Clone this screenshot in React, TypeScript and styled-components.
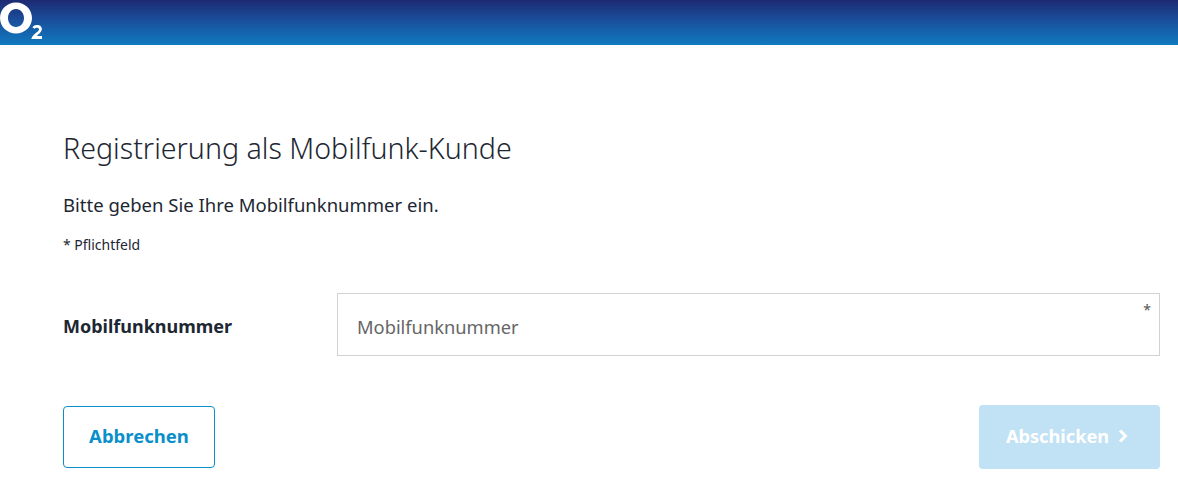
import React from "react";
import styled, { createGlobalStyle } from "styled-components";

const Global = createGlobalStyle`
  html, body { margin: 0; padding: 0; background: #fff; }
  body { font-family: "Noto Sans", "Open Sans", sans-serif; color: #1d2733; }
  * { box-sizing: border-box; }
`;

const Header = styled.header`
  height: 45px;
  background: linear-gradient(180deg, #1c2a72 0%, #1a4f9c 45%, #0f7abf 100%);
  overflow: hidden;
`;

const Logo = styled.svg`
  display: block;
  width: 48px;
  height: 45px;
`;

const Main = styled.main`
  padding: 83px 18px 0 63px;
`;

const Title = styled.h1`
  margin: 0;
  font-size: 28.6px;
  line-height: 40px;
  font-weight: 300;
  color: #1d2733;
`;

const Lead = styled.p`
  margin: 24px 0 0;
  font-size: 18.5px;
  line-height: 26px;
  font-weight: 400;
`;

const Note = styled.p`
  margin: 17px 0 0;
  font-size: 14px;
  line-height: 20px;
`;

const FieldRow = styled.div`
  display: grid;
  grid-template-columns: 274px 1fr;
  align-items: center;
  margin-top: 38px;
`;

const Label = styled.label`
  font-size: 18px;
  font-weight: 700;
  padding-top: 2px;
`;

const InputWrap = styled.div`
  position: relative;
  height: 63px;
  border: 1px solid #d2d2d2;
  display: flex;
  align-items: center;
  padding: 4px 19px 0;
`;

const Input = styled.input`
  border: 0;
  outline: 0;
  width: 100%;
  font: 400 18.3px "Noto Sans", sans-serif;
  color: #1d2733;
  padding: 0;
  &::placeholder { color: #666; opacity: 1; }
`;

const Star = styled.span`
  position: absolute;
  top: 7px;
  right: 8px;
  font-size: 14px;
  line-height: 18px;
  color: #555;
`;

const Actions = styled.div`
  display: flex;
  justify-content: space-between;
  align-items: center;
  margin-top: 49px;
`;

const Cancel = styled.button`
  width: 152px;
  height: 62px;
  background: #fff;
  border: 1px solid #0b8fc9;
  border-radius: 4px;
  color: #0b8fc9;
  font: 700 18.5px "Noto Sans", sans-serif;
  padding: 0 0 4px;
`;

const Submit = styled.button`
  width: 181px;
  height: 64px;
  background: #c0e2f4;
  border: 0;
  border-radius: 4px;
  color: #fff;
  font: 700 18.2px "Noto Sans", sans-serif;
  display: flex;
  align-items: center;
  justify-content: center;
  gap: 9px;
  padding: 0 5px 3px 0;
`;

export default function App() {
  return (
    <>
      <Global />
      <Header>
        <Logo viewBox="0 0 48 45" aria-label="O2">
          <path
            fillRule="evenodd"
            fill="#fff"
            d="M16 2.500C7 2.500 0 9.500 0 18s7 15.500 16 15.500S32 26.500 32 18 25 2.500 16 2.500zm0 6.500c-4.600 0-8 4-8 9s3.400 9 8 9 8-4 8-9-3.400-9-8-9z"
          />
          <path d="M33.500 28c1.500-2.200 6.500-2.400 7 1 .4 3-5.500 5.500-7 8.500h8.500" fill="none" stroke="#fff" strokeWidth="2.8" />
        </Logo>
      </Header>
      <Main>
        <Title>Registrierung als Mobilfunk-Kunde</Title>
        <Lead>Bitte geben Sie Ihre Mobilfunknummer ein.</Lead>
        <Note>* Pflichtfeld</Note>
        <FieldRow>
          <Label htmlFor="msisdn">Mobilfunknummer</Label>
          <InputWrap>
            <Input id="msisdn" placeholder="Mobilfunknummer" />
            <Star>*</Star>
          </InputWrap>
        </FieldRow>
        <Actions>
          <Cancel>Abbrechen</Cancel>
          <Submit>
            Abschicken
            <svg width="10" height="14" viewBox="0 0 10 14" fill="none" stroke="#fff" strokeWidth="3">
              <path d="M2 1.500l5.500 5.500-5.500 5.500" />
            </svg>
          </Submit>
        </Actions>
      </Main>
    </>
  );
}
